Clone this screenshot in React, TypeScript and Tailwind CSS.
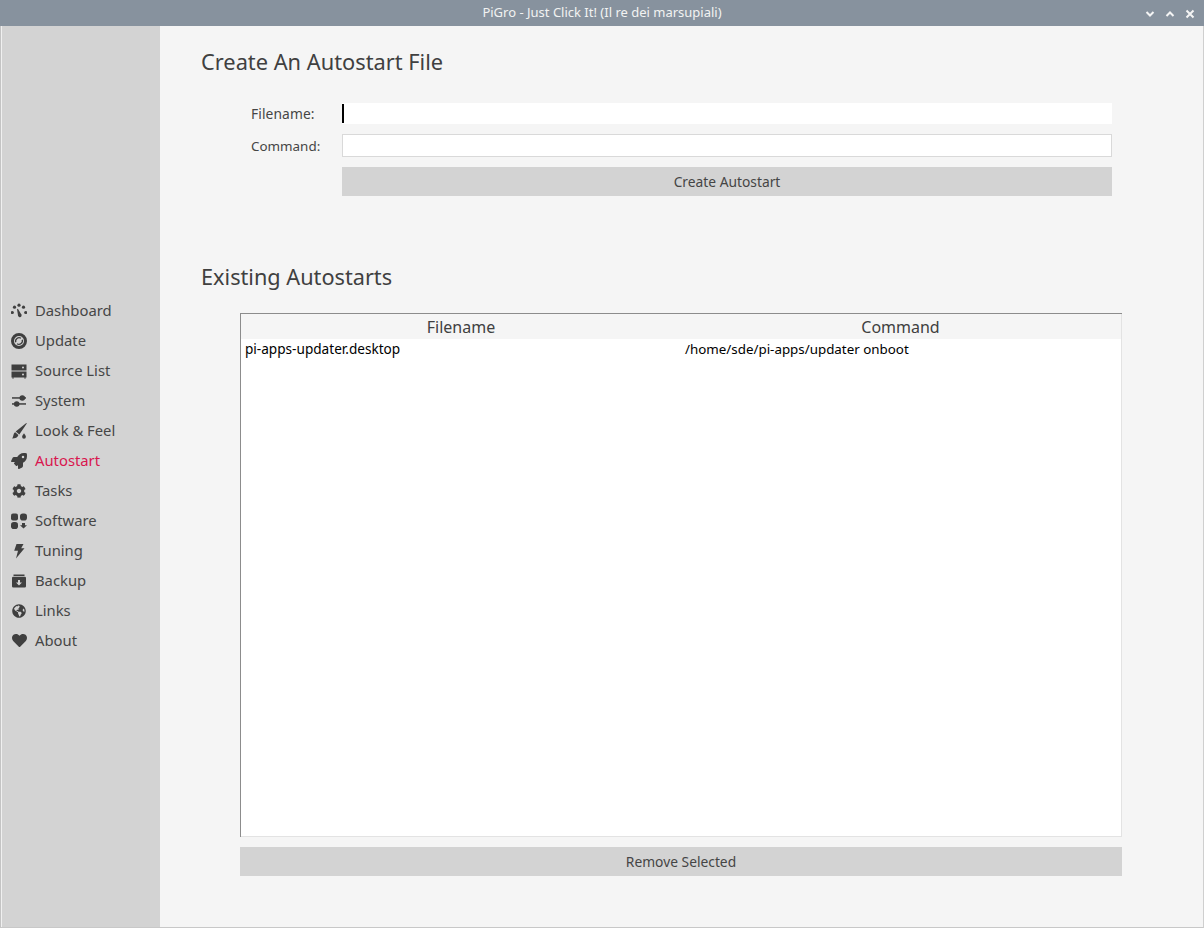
import React from "react";
import { FaRocket, FaCog, FaGlobeAmericas, FaHeart } from "react-icons/fa";

const font = "font-['Noto_Sans',sans-serif]";

function Dash() {
  return (
    <svg viewBox="0 0 16 16" className="w-4 h-4" fill="currentColor">
      <circle cx="1.300" cy="9.500" r="1.600" />
      <circle cx="3.500" cy="4.200" r="1.600" />
      <circle cx="8" cy="2.200" r="1.600" />
      <circle cx="12.500" cy="4.200" r="1.600" />
      <circle cx="14.700" cy="9.500" r="1.600" />
      <path d="M6 6.200l.9-.5 3 5a1.900 1.900 0 1 1-3 1.100z" />
    </svg>
  );
}
function Upd() {
  return (
    <svg viewBox="0 0 16 16" className="w-4 h-4" fill="none" stroke="currentColor">
      <circle cx="8" cy="8" r="6.500" strokeWidth="3" />
      <path d="M4.800 9.300a3.500 3.500 0 0 1 5.200-4.100M11.200 6.700a3.500 3.500 0 0 1-5.200 4.100" strokeWidth="1.300" />
    </svg>
  );
}
function Srv() {
  return (
    <svg viewBox="0 0 16 16" className="w-4 h-4" fill="currentColor">
      <path fillRule="evenodd" d="M.5 1.500h15v6H.5zM12 3.500a1 1 0 1 0 0 2 1 1 0 0 0 0-2z" />
      <path fillRule="evenodd" d="M.5 8.500h15v6h-1v1.200h-1v-1.200H2.500v1.200h-1v-1.200h-1zM12 10.500a1 1 0 1 0 0 2 1 1 0 0 0 0-2z" />
    </svg>
  );
}
function Sliders() {
  return (
    <svg viewBox="0 0 16 16" className="w-4 h-4" fill="currentColor">
      <rect x="1" y="4.200" width="14" height="1.500" />
      <rect x="1" y="10.200" width="14" height="1.500" />
      <circle cx="11.300" cy="5" r="2.800" />
      <circle cx="5.700" cy="11" r="2.800" />
    </svg>
  );
}
function Brush() {
  return (
    <svg viewBox="0 0 16 16" className="w-4 h-4" fill="currentColor">
      <path d="M15.300 0l.5.600-7.500 11-3.600-3z" />
      <path d="M4.200 9.300l3.200 2.700c-.5 2.300-3 3.600-6.400 3.600 1.600-1.200 1-5 3.200-6.300z" />
      <path d="M13 10.300c.8 1.300 1.900 2.300 1.900 3.500a1.900 1.900 0 0 1-3.800 0c0-1.200 1.100-2.200 1.900-3.500z" />
    </svg>
  );
}
function Bolt() {
  return (
    <svg viewBox="0 0 16 16" className="w-4 h-4" fill="currentColor">
      <path d="M5.500 1h7l-2.300 4.300h3.300L5 15.500l2-7.700H3.200z" />
    </svg>
  );
}
function Soft() {
  return (
    <svg viewBox="0 0 16 16" className="w-4 h-4" fill="currentColor">
      <rect x="0" y="0.500" width="7" height="7" rx="2" />
      <rect x="9" y="0.500" width="7" height="7" rx="2.800" />
      <rect x="0" y="9" width="7" height="7" rx="2.800" />
      <path d="M12.500 15.500l-3.500-3.300h2V10h3v2.200h2z" />
    </svg>
  );
}
function Arch() {
  return (
    <svg viewBox="0 0 16 16" className="w-4 h-4" fill="currentColor">
      <path d="M2.500 1.500h11v1.500h-11z" />
      <path fillRule="evenodd" d="M2.300 3.800h11.400a1.300 1.300 0 0 1 1.300 1.300v8.100a1.300 1.300 0 0 1-1.300 1.300H2.300A1.300 1.300 0 0 1 1 13.200V5.100a1.300 1.300 0 0 1 1.300-1.300zM7 7v2.500H5l3 3 3-3H9V7z" />
    </svg>
  );
}

const items: [string, React.ReactNode][] = [
  ["Dashboard", <Dash />],
  ["Update", <Upd />],
  ["Source List", <Srv />],
  ["System", <Sliders />],
  ["Look & Feel", <Brush />],
  ["Autostart", <FaRocket className="w-4 h-4" />],
  ["Tasks", <FaCog className="w-[14px] h-[14px]" />],
  ["Software", <Soft />],
  ["Tuning", <Bolt />],
  ["Backup", <Arch />],
  ["Links", <FaGlobeAmericas className="w-[14px] h-[14px]" />],
  ["About", <FaHeart className="w-[15px] h-[15px]" />],
];

function Row({ label, children, cls }: { label: string; children: React.ReactNode; cls: string }) {
  return (
    <div className="flex items-center">
      <div className={`w-[91px] leading-[20px] pt-[1px] text-[#454545] ${cls}`}>{label}</div>
      {children}
    </div>
  );
}

export default function App() {
  return (
    <div className={`${font} w-[1204px] h-[928px] flex flex-col bg-[#f5f5f5] overflow-hidden`}>
      <div className="h-[26px] shrink-0 bg-[#87929e] relative flex items-center justify-center text-[13px] text-[#f2f2f2]">
        PiGro - Just Click It! (Il re dei marsupiali)
        <div className="absolute right-[9px] top-[9px] flex gap-[10px] text-[#f4f4f4]">
          <svg viewBox="0 0 10 10" className="w-[10px] h-[10px]" fill="none" stroke="currentColor" strokeWidth="2"><path d="M1.500 3l3.500 3.500L8.500 3" /></svg>
          <svg viewBox="0 0 10 10" className="w-[10px] h-[10px]" fill="none" stroke="currentColor" strokeWidth="2"><path d="M1.500 7L5 3.500 8.500 7" /></svg>
          <svg viewBox="0 0 10 10" className="w-[10px] h-[10px]" fill="none" stroke="currentColor" strokeWidth="2"><path d="M1.500 1.500l7 7M8.500 1.500l-7 7" /></svg>
        </div>
      </div>
      <div className="flex-1 flex min-h-0 border-l-[1px] border-l-[#c4c4c4] border-r-[1px] border-r-[#cfcfcf] border-b-[1px] border-b-[#c8c8c8]">
        <div className="w-[159px] shrink-0 border-l-[1px] border-l-[#f0f0f0] bg-[#d3d3d3] flex flex-col justify-center pb-[2px]">
          <div className="flex flex-col text-[#3f3f3f]">
            {items.map(([label, icon]) => (
              <div key={label} className={`h-[30px] flex items-center text-[14.800px] ${label === "Autostart" ? "text-[#d9164f]" : "text-[#464646]"}`}>
                <div className="w-[16px] ml-[9px] mr-[8px] flex justify-center text-[#3f3f3f]">{icon}</div>
                <span>{label}</span>
              </div>
            ))}
          </div>
        </div>
        <div className="flex-1 min-w-0 flex flex-col pl-[41px]">
          <div className="text-[21.800px] leading-[28px] text-[#404040] mt-[22px]">Create An Autostart File</div>
          <div className="mt-[27px] ml-[50px] w-[861px] flex flex-col">
            <Row label="Filename:" cls="text-[13.800px] tracking-[0.1px]">
              <div className="flex-1 h-[21px] bg-white flex items-center">
                <div className="w-[2px] h-[19px] bg-black" />
              </div>
            </Row>
            <div className="mt-[10px]">
              <Row label="Command:" cls="text-[13.400px]">
                <div className="flex-1 h-[23px] bg-white border border-[#d9d9d9]" />
              </Row>
            </div>
            <button className="mt-[10px] ml-[91px] h-[29px] pt-[1px] bg-[#d3d3d3] text-[13.800px] text-[#454545]">Create Autostart</button>
          </div>
          <div className="text-[21.700px] leading-[28px] text-[#404040] mt-[67px]">Existing Autostarts</div>
          <div className="mt-[22px] ml-[39px] w-[882px] h-[524px] bg-white border-l border-t border-[#8c8c8c] flex flex-col">
            <div className="flex-1 flex flex-col border-r border-b border-[#e3e3e3]">
              <div className="h-[25px] bg-[#f5f5f5] grid grid-cols-[440px_1fr] text-[16px] text-[#404040] leading-[26px] text-center">
                <div>Filename</div>
                <div className="pr-[1px]">Command</div>
              </div>
              <div className="grid grid-cols-[440px_1fr] text-black leading-[20px]">
                <div className="pl-[4px] text-[13.600px]">pi-apps-updater.desktop</div>
                <div className="pl-[4px] text-[13.360px]">/home/sde/pi-apps/updater onboot</div>
              </div>
            </div>
          </div>
          <button className="mt-[10px] ml-[39px] w-[882px] h-[29px] pt-[1px] bg-[#d3d3d3] text-[13.800px] text-[#454545]">Remove Selected</button>
        </div>
      </div>
    </div>
  );
}
